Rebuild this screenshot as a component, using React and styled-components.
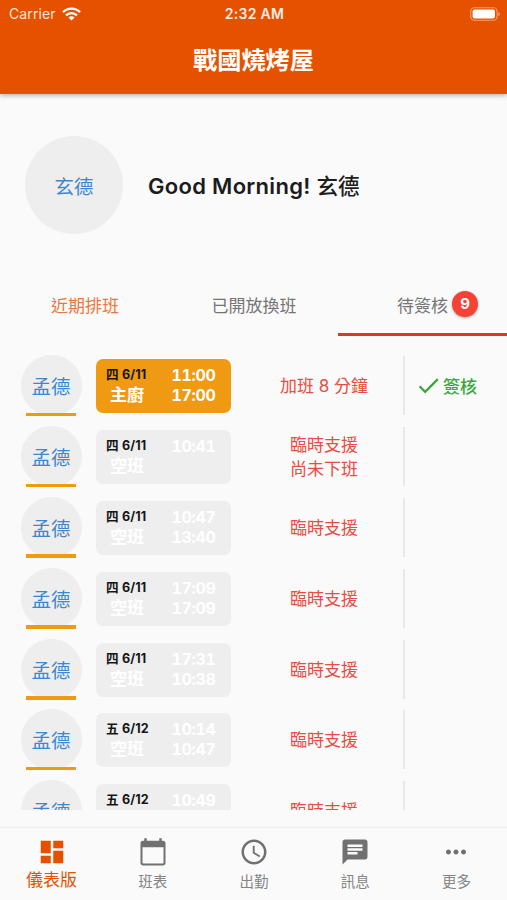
import styled, { createGlobalStyle } from 'styled-components';
import { MdDashboard, MdAccessTime, MdChat, MdMoreHoriz, MdCheck } from 'react-icons/md';

const GlobalStyle = createGlobalStyle`
  * { box-sizing: border-box; }
  body {
    margin: 0;
    background: #fafafa;
    font-family: Inter, "Noto Sans CJK TC", sans-serif;
    overflow: hidden;
  }
`;

const Screen = styled.div`
  width: 507px;
  height: 900px;
  display: flex;
  flex-direction: column;
  overflow: hidden;
  white-space: nowrap;
`;

/* header */
const Header = styled.header`
  height: 94px;
  flex: none;
  background: #e65100;
  color: #fff;
  box-shadow: 0 1px 5px rgba(0, 0, 0, 0.35);
`;
const StatusBar = styled.div`
  height: 28px;
  padding: 0 7px 0 9px;
  display: grid;
  grid-template-columns: 1fr auto 1fr;
  align-items: center;
  font-size: 14px;
  line-height: 28px;
`;
const Carrier = styled.div`
  display: flex;
  align-items: center;
  gap: 6px;
  color: #ffe6d8;
  letter-spacing: 0.1px;
`;
const Clock = styled.div`
  font-weight: 600;
  color: #ffeee4;
  letter-spacing: 0.3px;
`;
const Battery = styled.svg`
  justify-self: end;
`;
const Title = styled.h1`
  margin: 0;
  height: 62px;
  padding-top: 2px;
  line-height: 62px;
  text-align: center;
  font-size: 24.2px;
  font-weight: 700;
`;

/* greeting */
const Greeting = styled.section`
  height: 182px;
  flex: none;
  display: flex;
  align-items: center;
  gap: 25px;
  padding: 0 25px;
`;
const BigAvatar = styled.div`
  width: 98px;
  height: 98px;
  padding-top: 2px;
  border-radius: 50%;
  background: #eee;
  color: #3d86d0;
  font-size: 19.4px;
  line-height: 98px;
  text-align: center;
`;
const Hello = styled.div`
  padding-bottom: 2px;
  font-size: 22px;
  font-weight: 600;
  letter-spacing: 0.3px;
  color: #1c1c1c;
`;
const HelloName = styled.span`
  font-size: 21.5px;
  font-weight: 500;
  letter-spacing: 0;
`;

/* tabs */
const Tabs = styled.div`
  height: 60px;
  flex: none;
  display: grid;
  grid-template-columns: repeat(3, 169px);
`;
const Tab = styled.div`
  display: flex;
  align-items: center;
  justify-content: center;
  gap: 4px;
  padding-left: ${(props) => (props.$active ? '30px' : '1px')};
  font-size: 17px;
  color: ${(props) => props.$color || '#757575'};
  border-bottom: 3px solid ${(props) => (props.$active ? '#d9362f' : 'transparent')};
`;
const Badge = styled.span`
  width: 26px;
  height: 26px;
  margin-top: -1px;
  border-radius: 50%;
  background: #f44336;
  box-shadow: 0 1px 3px rgba(0, 0, 0, 0.3);
  color: #fff;
  font-size: 15px;
  font-weight: 700;
  line-height: 26px;
  text-align: center;
`;

/* shift list */
const List = styled.main`
  height: 473.5px;
  flex: none;
  padding-top: 19.2px;
  overflow: hidden;
`;
const Row = styled.div`
  height: 70.85px;
  display: grid;
  grid-template-columns: 61px 135px 172px 1fr;
  align-items: start;
  padding-left: 20.5px;
`;
const Avatar = styled.div`
  height: 61px;
  background: radial-gradient(circle at 50% 30.5px, #eee 30px, transparent 31px);
  color: #3d86d0;
  font-size: 19.4px;
  text-align: center;
  display: flex;
  flex-direction: column;
  justify-content: space-between;
  align-items: center;

  &::after {
    content: '';
    width: 49.5px;
    height: 3.5px;
    flex: none;
    background: #ef9a12;
  }
`;
const AvatarName = styled.span`
  height: 57px;
  line-height: 64px;
`;
const Card = styled.div`
  width: 135px;
  height: 54px;
  margin: 4px 0 0 14.5px;
  padding: 5px 15px 5px 10px;
  border-radius: 7px;
  background: ${(props) => (props.$filled ? '#f09a13' : '#eee')};
  color: #fff;
  display: flex;
  justify-content: space-between;
`;
const CardCol = styled.div`
  display: flex;
  flex-direction: column;
`;
const ShiftDate = styled.span`
  height: 20px;
  line-height: 21px;
  font-size: 12.6px;
  font-weight: 700;
  letter-spacing: 0.15px;
  color: #161616;
`;
const ShiftName = styled.span`
  height: 22px;
  line-height: 22px;
  padding-left: 4px;
  font-size: 17px;
  font-weight: 700;
`;
const ShiftTime = styled.span`
  width: 45px;
  height: 20px;
  line-height: 23px;
  font-size: 16px;
  font-weight: 700;
  font-variant-numeric: tabular-nums;
  letter-spacing: -0.3px;
  text-align: center;
`;
const Reason = styled.div`
  height: 61px;
  padding-top: 1.5px;
  margin-left: 43px;
  display: flex;
  flex-direction: column;
  align-items: center;
  justify-content: center;
  font-size: 17px;
  line-height: 24.5px;
  color: #ea4b42;
`;
const Approve = styled.div`
  height: 59px;
  margin: 1px 0 0 14.5px;
  padding-left: 10px;
  border-left: 2px solid #e8e8e8;
  display: flex;
  align-items: center;
  gap: 1px;
  font-size: 17px;
  font-weight: 500;
  color: #3ba53f;
`;

/* bottom navigation */
const BottomNav = styled.nav`
  height: 73px;
  flex: none;
  margin-top: auto;
  padding-left: 1px;
  display: grid;
  grid-template-columns: repeat(5, 1fr);
  border-top: 1px solid #f0f0f0;
  box-shadow: 0 -1px 2px rgba(0, 0, 0, 0.02);
`;
const NavItem = styled.div`
  padding-top: 9px;
  display: flex;
  flex-direction: column;
  align-items: center;
  color: ${(props) => (props.$active ? '#e65100' : '#707070')};
`;
const NavLabel = styled.span`
  height: 26px;
  line-height: ${(props) => (props.$active ? '27px' : '30px')};
  font-size: ${(props) => (props.$active ? '17px' : '14.5px')};
  color: ${(props) => (props.$active ? '#e65100' : '#858585')};
`;

const shifts = [
  { date: '四 6/11', name: '主廚', start: '11:00', end: '17:00', reasons: ['加班 8 分鐘'], filled: true },
  { date: '四 6/11', name: '空班', start: '10:41', end: '', reasons: ['臨時支援', '尚未下班'] },
  { date: '四 6/11', name: '空班', start: '10:47', end: '13:40', reasons: ['臨時支援'] },
  { date: '四 6/11', name: '空班', start: '17:09', end: '17:09', reasons: ['臨時支援'] },
  { date: '四 6/11', name: '空班', start: '17:31', end: '10:38', reasons: ['臨時支援'] },
  { date: '五 6/12', name: '空班', start: '10:14', end: '10:47', reasons: ['臨時支援'] },
  { date: '五 6/12', name: '空班', start: '10:49', end: '', reasons: ['臨時支援'] },
];

const menus = [
  { label: '儀表版', Icon: MdDashboard },
  { label: '班表', Icon: CalendarIcon },
  { label: '出勤', Icon: MdAccessTime },
  { label: '訊息', Icon: MdChat },
  { label: '更多', Icon: MdMoreHoriz },
];

function WifiIcon() {
  return (
    <svg width="19" height="14" viewBox="0 0 19 14" fill="none" stroke="#fff" strokeWidth="2.3">
      <path d="M1 5.1a12 12 0 0 1 17 0" />
      <path d="M4.1 8.4a7.6 7.6 0 0 1 10.8 0" />
      <path d="M9.5 13.6 6.5 10.6a4.2 4.2 0 0 1 6 0z" fill="#fff" stroke="none" />
    </svg>
  );
}

function BatteryIcon() {
  return (
    <Battery width="30" height="14" viewBox="0 0 30 14">
      <rect x="0.7" y="0.7" width="26.4" height="12.6" rx="3.8" fill="none" stroke="#f4a078" strokeWidth="1.1" />
      <rect x="2.6" y="2.5" width="22.4" height="9" rx="2" fill="#fff" />
      <path d="M28.4 5v4q1.5-.6 1.5-2t-1.5-2z" fill="#f4a078" />
    </Battery>
  );
}

// calendar with a solid top bar, thin frame below
function CalendarIcon({ size }) {
  return (
    <svg width={size} height={size} viewBox="0 0 24 24" fill="none" stroke="currentColor">
      <rect x="2.8" y="3.8" width="18.4" height="18.2" rx="1.4" strokeWidth="1.6" />
      <path d="M2.8 5.9h18.4" strokeWidth="4.6" />
      <path d="M6 1v3M18 1v3" strokeWidth="2" />
    </svg>
  );
}

function ShiftRow({ shift }) {
  return (
    <Row>
      <Avatar>
        <AvatarName>孟德</AvatarName>
      </Avatar>
      <Card $filled={shift.filled}>
        <CardCol>
          <ShiftDate>{shift.date}</ShiftDate>
          <ShiftName>{shift.name}</ShiftName>
        </CardCol>
        <CardCol>
          <ShiftTime>{shift.start}</ShiftTime>
          <ShiftTime>{shift.end}</ShiftTime>
        </CardCol>
      </Card>
      <Reason>
        {shift.reasons.map((reason) => (
          <span key={reason}>{reason}</span>
        ))}
      </Reason>
      <Approve>
        {shift.filled && (
          <>
            <MdCheck size={27} />
            簽核
          </>
        )}
      </Approve>
    </Row>
  );
}

function App() {
  return (
    <Screen>
      <GlobalStyle />
      <Header>
        <StatusBar>
          <Carrier>
            Carrier
            <WifiIcon />
          </Carrier>
          <Clock>2:32 AM</Clock>
          <BatteryIcon />
        </StatusBar>
        <Title>戰國燒烤屋</Title>
      </Header>

      <Greeting>
        <BigAvatar>玄德</BigAvatar>
        <Hello>
          Good Morning! <HelloName>玄德</HelloName>
        </Hello>
      </Greeting>

      <Tabs>
        <Tab $color="#ea7840">近期排班</Tab>
        <Tab>已開放換班</Tab>
        <Tab $active>
          待簽核
          <Badge>9</Badge>
        </Tab>
      </Tabs>

      <List>
        {shifts.map((shift, i) => (
          <ShiftRow key={i} shift={shift} />
        ))}
      </List>

      <BottomNav>
        {menus.map(({ label, Icon }, i) => (
          <NavItem key={label} $active={i === 0}>
            <Icon size={30} />
            <NavLabel $active={i === 0}>{label}</NavLabel>
          </NavItem>
        ))}
      </BottomNav>
    </Screen>
  );
}

export default App;
